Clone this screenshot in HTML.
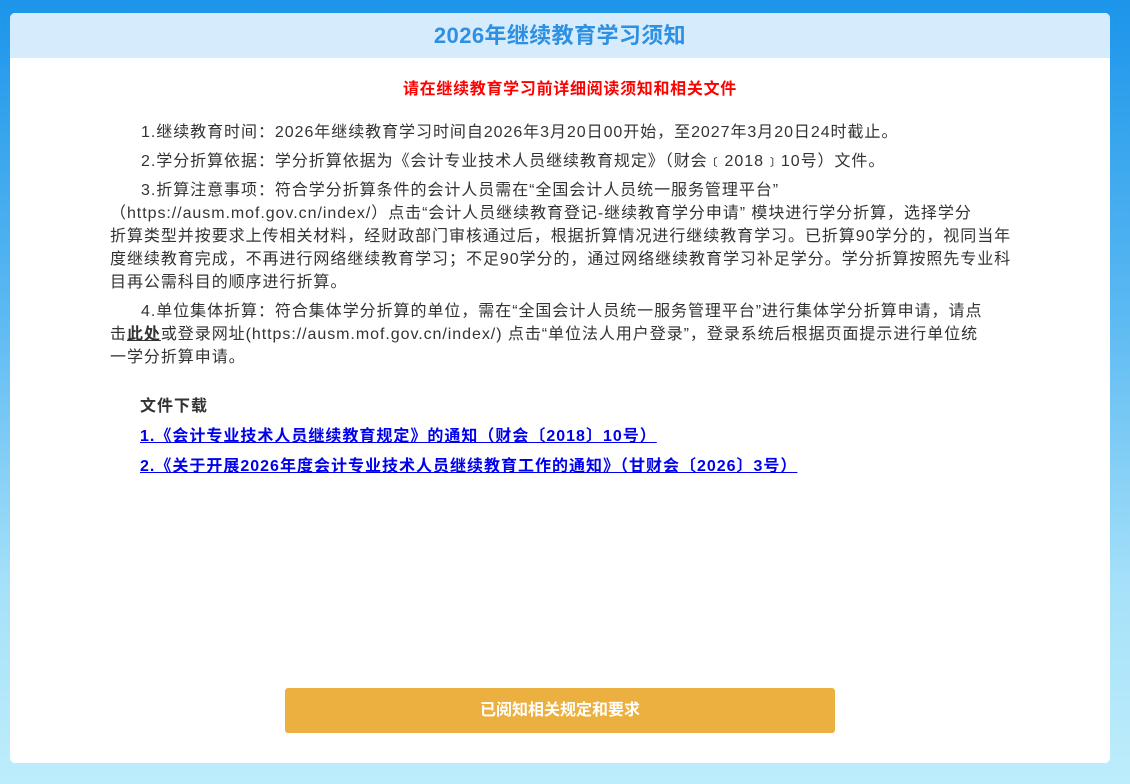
<!DOCTYPE html>
<html><head><meta charset="utf-8"><style>
html,body{margin:0;padding:0;width:1130px;height:784px;overflow:hidden}
body{background:linear-gradient(#1c95ea 0%,#5bb9f2 40%,#a6e1f9 75%,#bdedfb 100%);font-family:"Liberation Sans","Noto Sans CJK SC",sans-serif;position:relative}
.card{position:absolute;left:10px;top:13px;width:1100px;height:750px;background:#fff;border-radius:5px;overflow:hidden}
.hd{height:45px;background:#d6ebfc;text-align:center;line-height:45px;font-size:22px;font-weight:bold;color:#2d90e2;letter-spacing:0.4px}
.red{position:absolute;top:67px;left:0;width:1100px;text-align:center;color:#f00;font-weight:bold;font-size:16px;letter-spacing:0.7px;line-height:20px;padding-left:20px;box-sizing:border-box}
.body{position:absolute;left:100px;top:108px;width:960px;font-size:16px;letter-spacing:0.95px;color:#333;line-height:23px;white-space:nowrap}
.body p{margin:0 0 6px}
.body .i{display:inline-block;width:31px}
.dl{position:absolute;left:130px;top:384px;font-size:16px;letter-spacing:1px;font-weight:bold;line-height:20px}
.dl div{margin-bottom:10px;color:#333}
.dl a{color:#0000ee;text-decoration:underline;display:block;margin-bottom:10px}
.btn{position:absolute;left:275px;top:675px;width:550px;height:45px;background:#ebb040;border-radius:3px;color:#fff;font-weight:bold;font-size:16px;line-height:45px;text-align:center}
</style></head><body>
<div class="card">
<div class="hd">2026年继续教育学习须知</div>
<div class="red">请在继续教育学习前详细阅读须知和相关文件</div>
<div class="body">
<p><span class="i"></span>1.继续教育时间：2026年继续教育学习时间自2026年3月20日00开始，至2027年3月20日24时截止。</p>
<p><span class="i"></span>2.学分折算依据：学分折算依据为《会计专业技术人员继续教育规定》（财会﹝2018﹞10号）文件。</p>
<p><span class="i"></span>3.折算注意事项：符合学分折算条件的会计人员需在“全国会计人员统一服务管理平台”<br>（https://ausm.mof.gov.cn/index/）点击“会计人员继续教育登记-继续教育学分申请” 模块进行学分折算，选择学分<br>折算类型并按要求上传相关材料，经财政部门审核通过后，根据折算情况进行继续教育学习。已折算90学分的，视同当年<br>度继续教育完成，不再进行网络继续教育学习；不足90学分的，通过网络继续教育学习补足学分。学分折算按照先专业科<br>目再公需科目的顺序进行折算。</p>
<p><span class="i"></span>4.单位集体折算：符合集体学分折算的单位，需在“全国会计人员统一服务管理平台”进行集体学分折算申请，请点<br>击<b><u>此处</u></b>或登录网址(https://ausm.mof.gov.cn/index/) 点击“单位法人用户登录”，登录系统后根据页面提示进行单位统<br>一学分折算申请。</p>
</div>
<div class="dl">
<div>文件下载</div>
<a>1.《会计专业技术人员继续教育规定》的通知（财会〔2018〕10号）</a>
<a>2.《关于开展2026年度会计专业技术人员继续教育工作的通知》（甘财会〔2026〕3号）</a>
</div>
<div class="btn">已阅知相关规定和要求</div>
</div>
</body></html>
